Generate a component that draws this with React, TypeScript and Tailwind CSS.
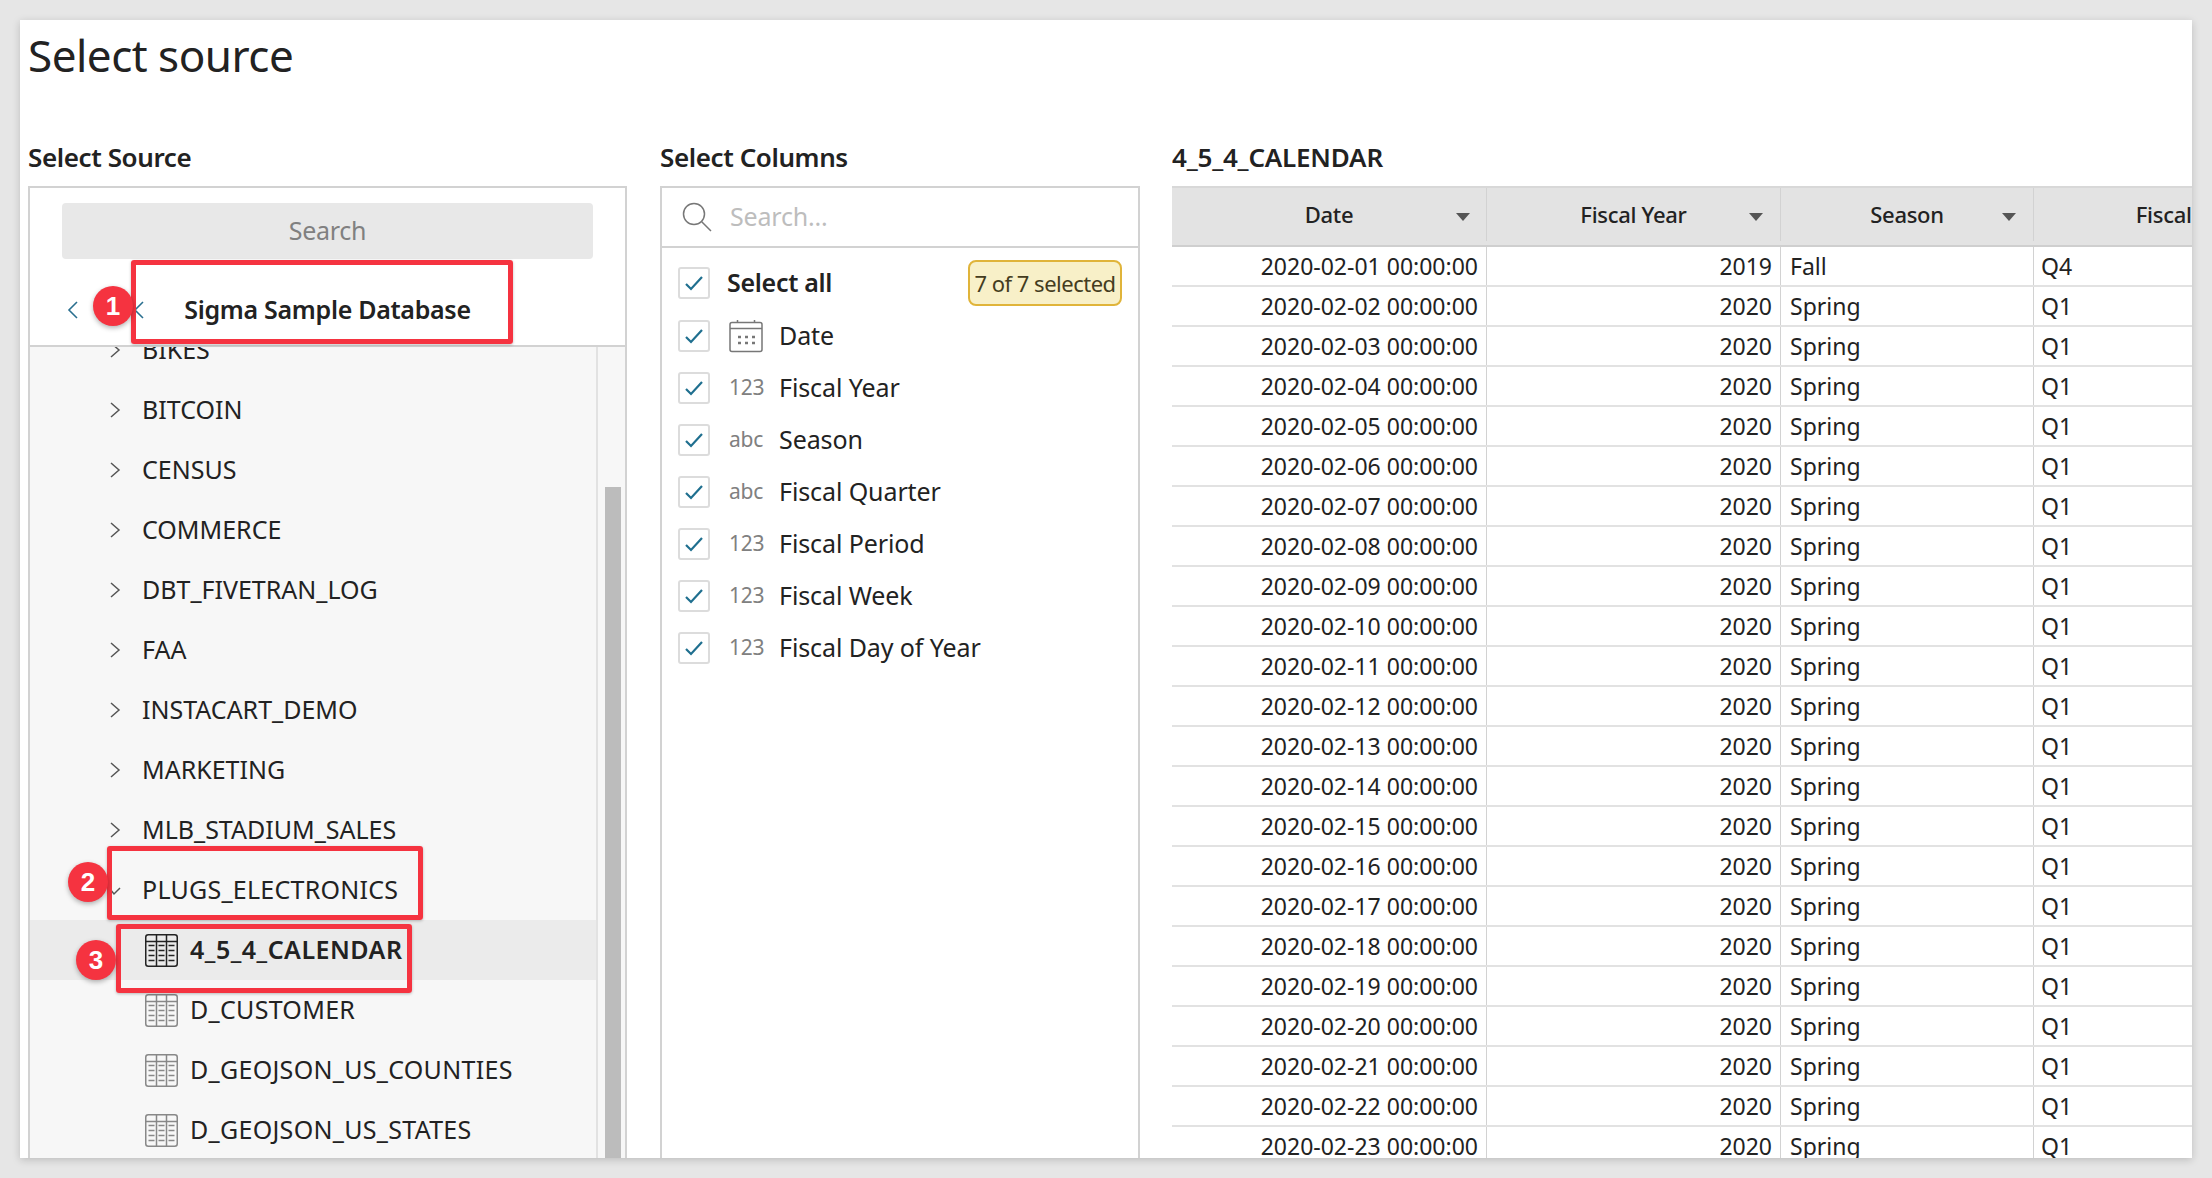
import React from "react";

const font = "font-['Noto_Sans','Open_Sans',sans-serif]";

function Chevron({ down = false }: { down?: boolean }) {
  return (
    <svg width="14" height="20" viewBox="0 0 14 20" fill="none" stroke="#555" strokeWidth="1.5" className="shrink-0">
      {down ? <path d="M2 9l4 5 6-6" /> : <path d="M3 3l8 7-8 7" />}
    </svg>
  );
}

function TableIcon({ dark = false }: { dark?: boolean }) {
  const c = dark ? "#222" : "#888";
  const rows = [13, 18, 23, 28];
  return (
    <svg width="33" height="33" viewBox="0 0 33 33" fill="none" className="shrink-0">
      <rect x="0.75" y="0.75" width="31.5" height="31.5" rx="2.5" stroke={c} strokeWidth="1.5" />
      <path d="M1 7.5h31M11.5 1v31M21.5 1v31" stroke={c} strokeWidth="1.5" />
      {rows.map((y) => (
        <path key={y} d={`M3.5 ${y - 1.5}h6M13.5 ${y - 1.5}h6M23.5 ${y - 1.5}h6`} stroke={c} strokeWidth="1.5" />
      ))}
    </svg>
  );
}

function CalendarIcon() {
  return (
    <svg width="34" height="34" viewBox="0 0 34 34" fill="none" stroke="#777" strokeWidth="1.5" className="shrink-0">
      <rect x="1" y="3.5" width="32" height="29" rx="2" />
      <path d="M1 9.5h32M8.5 1v3M25.5 1v3" />
      <path d="M9 18h3M16 18h3M23 18h3M9 24h3M16 24h3M23 24h3" strokeWidth="2.5" />
    </svg>
  );
}

function Check() {
  return (
    <span className="flex h-[32px] w-[32px] shrink-0 items-center justify-center rounded-[3px] border-2 border-[#dcdcdc] bg-white">
      <svg width="20" height="16" viewBox="0 0 20 16" fill="none" stroke="#1f6f8f" strokeWidth="2.2">
        <path d="M2 9l5 5L18 2" />
      </svg>
    </span>
  );
}

function Tri() {
  return (
    <svg width="14" height="8" viewBox="0 0 14 8" className="shrink-0">
      <path d="M0 0h14L7 8z" fill="#555" />
    </svg>
  );
}

function Marker({ n, className }: { n: number; className: string }) {
  return (
    <span
      className={`absolute flex h-[40px] w-[40px] items-center justify-center rounded-full bg-[#f53340] text-[26px] font-bold text-white shadow-[0_2px_5px_rgba(0,0,0,0.3)] font-['Liberation_Sans',sans-serif] ${className}`}
    >
      {n}
    </span>
  );
}

const folders = ["BIKES", "BITCOIN", "CENSUS", "COMMERCE", "DBT_FIVETRAN_LOG", "FAA", "INSTACART_DEMO", "MARKETING", "MLB_STADIUM_SALES"];
const tables = ["D_CUSTOMER", "D_GEOJSON_US_COUNTIES", "D_GEOJSON_US_STATES"];
const columns = [
  ["123", "Fiscal Year"],
  ["abc", "Season"],
  ["abc", "Fiscal Quarter"],
  ["123", "Fiscal Period"],
  ["123", "Fiscal Week"],
  ["123", "Fiscal Day of Year"],
];
const days = Array.from({ length: 23 }, (_, i) => i + 1);

export default function App() {
  return (
    <div className={`h-[1178px] w-[2212px] overflow-hidden bg-[#e6e6e6] p-[20px] text-[#222] ${font}`}>
      <div className="relative flex h-[1138px] w-[2172px] flex-col overflow-hidden bg-white pl-[8px] shadow-[0_2px_8px_rgba(0,0,0,0.18)]">
        <h1 className="flex h-[114px] shrink-0 items-start pt-[5px] text-[44px] leading-[60px] font-normal tracking-[-0.5px]">Select source</h1>
        <div className="flex min-h-0 flex-1">
          {/* Source */}
          <section className="flex w-[599px] shrink-0 flex-col">
            <h2 className="flex h-[52px] shrink-0 items-center pb-[6px] text-[26px] font-semibold tracking-[-0.4px]">Select Source</h2>
            <div className="flex min-h-0 flex-1 flex-col border-x-2 border-t-2 border-[#d2d2d2]">
              <div className="h-[159px] shrink-0 border-b-2 border-[#d2d2d2] px-[32px] pt-[15px]">
                <div className="flex h-[56px] items-center justify-center rounded-[4px] bg-[#e8e8e8] text-[25px] tracking-[-0.3px] text-[#808080]">Search</div>
                <div className="relative mt-[26px] flex h-[50px] items-center justify-center text-[25px] font-semibold tracking-[-0.3px]">
                  <svg width="12" height="20" viewBox="0 0 12 20" fill="none" stroke="#2a6f8f" strokeWidth="1.6" className="absolute left-[5px] top-[15px]">
                    <path d="M10 2L2 10l8 8" />
                  </svg>
                  <svg width="12" height="20" viewBox="0 0 12 20" fill="none" stroke="#2a6f8f" strokeWidth="1.6" className="absolute left-[71px] top-[15px]">
                    <path d="M10 2L2 10l8 8" />
                  </svg>
                  Sigma Sample Database
                </div>
              </div>
              <div className="flex min-h-0 flex-1 overflow-hidden bg-[#f7f7f7]">
                <div className="min-w-0 flex-1 border-r-2 border-[#e2e2e2] text-[25px]">
                  <div className="-mt-[27px]">
                    {folders.map((f) => (
                      <div key={f} className="flex h-[60px] items-center gap-[20px] pl-[78px]">
                        <Chevron />
                        {f}
                      </div>
                    ))}
                    <div className="flex h-[60px] items-center gap-[20px] pl-[78px] tracking-[0.25px]">
                      <Chevron down />
                      PLUGS_ELECTRONICS
                    </div>
                    <div className="flex h-[60px] items-center gap-[12px] bg-[#ebebeb] pl-[115px] font-semibold tracking-[0.5px]">
                      <TableIcon dark />
                      4_5_4_CALENDAR
                    </div>
                    {tables.map((t) => (
                      <div key={t} className="flex h-[60px] items-center gap-[12px] pl-[115px] tracking-[0.3px]">
                        <TableIcon />
                        {t}
                      </div>
                    ))}
                  </div>
                </div>
                <div className="w-[27px] shrink-0 pl-[7px] pt-[140px]">
                  <div className="h-full w-[16px] bg-[#bcbcbc]" />
                </div>
              </div>
            </div>
          </section>

          {/* Columns */}
          <section className="ml-[33px] flex w-[480px] shrink-0 flex-col">
            <h2 className="flex h-[52px] shrink-0 items-center pb-[6px] text-[26px] font-semibold tracking-[-0.4px]">Select Columns</h2>
            <div className="flex min-h-0 flex-1 flex-col border-x-2 border-t-2 border-[#d2d2d2]">
              <div className="flex h-[60px] shrink-0 items-center gap-[18px] border-b-2 border-[#d2d2d2] pl-[20px]">
                <svg width="30" height="30" viewBox="0 0 30 30" fill="none" stroke="#777" strokeWidth="1.5" className="shrink-0">
                  <circle cx="12" cy="12" r="10.5" />
                  <path d="M19.5 19.5L29 29" />
                </svg>
                <span className="text-[25px] tracking-[-0.2px] text-[#bdbdbd]">Search...</span>
              </div>
              <div className="pl-[16px] pr-[15px] pt-[8px]">
                <div className="flex h-[54px] items-center gap-[17px]">
                  <Check />
                  <span className="text-[25px] font-semibold tracking-[-0.3px]">Select all</span>
                  <span className="ml-auto mr-[1px] flex h-[46px] w-[154px] items-center justify-center rounded-[8px] border-2 border-[#e0b43a] bg-[#f8f0c8] text-[22px] tracking-[-0.5px] text-[#443c20]">7 of 7 selected</span>
                </div>
                <div className="flex h-[52px] items-center">
                  <Check />
                  <span className="ml-[19px]"><CalendarIcon /></span>
                  <span className="ml-[16px] text-[25px] tracking-[-0.1px]">Date</span>
                </div>
                {columns.map(([t, l]) => (
                  <div key={l} className="flex h-[52px] items-center">
                    <Check />
                    <span className="ml-[19px] w-[35px] shrink-0 text-[21px] tracking-[-0.2px] text-[#808080]">{t}</span>
                    <span className="ml-[15px] text-[25px] tracking-[-0.1px]">{l}</span>
                  </div>
                ))}
              </div>
            </div>
          </section>

          {/* Preview */}
          <section className="ml-[32px] flex min-w-0 flex-1 flex-col overflow-hidden">
            <h2 className="flex h-[52px] shrink-0 items-center pb-[6px] text-[26px] font-semibold tracking-[-0.2px]">4_5_4_CALENDAR</h2>
            <div className="w-[1218px] text-[23px]">
              <div className="flex h-[61px] border-y-2 border-t-[#d8d8d8] border-b-[#cfcfcf] bg-[#e3e3e3] pb-[4px] text-[22px] font-medium tracking-[-0.3px]">
                <div className="relative flex w-[315px] items-center justify-center border-r border-[#d2d2d2]">
                  Date
                  <span className="absolute right-[16px] top-[25px]"><Tri /></span>
                </div>
                <div className="relative flex w-[294px] items-center justify-center border-r border-[#d2d2d2]">
                  Fiscal Year
                  <span className="absolute right-[17px] top-[25px]"><Tri /></span>
                </div>
                <div className="relative flex w-[253px] items-center justify-center border-r border-[#d2d2d2]">
                  Season
                  <span className="absolute right-[17px] top-[25px]"><Tri /></span>
                </div>
                <div className="flex w-[346px] items-center justify-center">Fiscal Quarter</div>
              </div>
              {days.map((d) => (
                <div key={d} className="flex h-[40px] border-b-2 border-[#e2e2e2]">
                  <div className="flex w-[315px] items-center justify-end border-r border-[#d2d2d2] pr-[8px]">{`2020-02-${String(d).padStart(2, "0")} 00:00:00`}</div>
                  <div className="flex w-[294px] items-center justify-end border-r border-[#d2d2d2] pr-[8px]">{d === 1 ? "2019" : "2020"}</div>
                  <div className="flex w-[253px] items-center border-r border-[#d2d2d2] pl-[9px]">{d === 1 ? "Fall" : "Spring"}</div>
                  <div className="flex w-[356px] items-center pl-[7px]">{d === 1 ? "Q4" : "Q1"}</div>
                </div>
              ))}
            </div>
          </section>
        </div>

        {/* Annotations (card origin is 20,20) */}
        <span className="absolute left-[111px] top-[240px] h-[84px] w-[382px] rounded-[3px] border-[5px] border-[#f53340] shadow-[0_1px_3px_rgba(0,0,0,0.25)]" />
        <span className="absolute left-[87px] top-[826px] h-[74px] w-[316px] rounded-[3px] border-[5px] border-[#f53340] shadow-[0_1px_3px_rgba(0,0,0,0.25)]" />
        <span className="absolute left-[96px] top-[904px] h-[69px] w-[296px] rounded-[3px] border-[5px] border-[#f53340] shadow-[0_1px_3px_rgba(0,0,0,0.25)]" />
        <Marker n={1} className="left-[73px] top-[266px]" />
        <Marker n={2} className="left-[48px] top-[842px]" />
        <Marker n={3} className="left-[56px] top-[920px]" />
      </div>
    </div>
  );
}
